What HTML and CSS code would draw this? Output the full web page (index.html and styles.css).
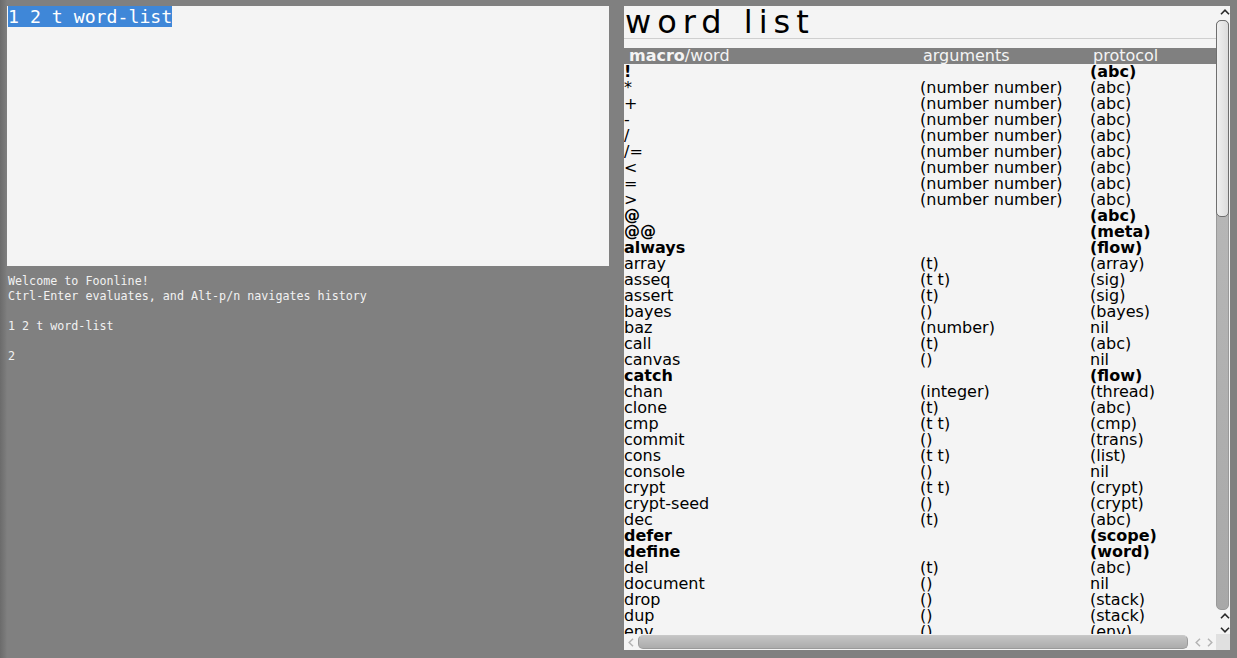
FILE: index.html
```html
<!DOCTYPE html>
<html>
<head>
<meta charset="utf-8">
<title>Foonline</title>
<link rel="stylesheet" href="styles.css">
</head>
<body>
<div class="app">
  <section class="left">
    <div class="editor"><span class="sel">1 2 t word-list</span></div>
    <pre class="output">Welcome to Foonline!
Ctrl-Enter evaluates, and Alt-p/n navigates history

1 2 t word-list

2</pre>
  </section>
  <section class="panel">
    <div class="content">
      <h1 class="title">word list</h1>
      <div class="table">
        <div class="row head"><span class="c1"><b>macro</b>/word</span><span class="c2">arguments</span><span class="c3">protocol</span></div>
        <div class="row b"><span>!</span><span></span><span>(abc)</span></div>
        <div class="row"><span>*</span><span>(number number)</span><span>(abc)</span></div>
        <div class="row"><span>+</span><span>(number number)</span><span>(abc)</span></div>
        <div class="row"><span>-</span><span>(number number)</span><span>(abc)</span></div>
        <div class="row"><span>/</span><span>(number number)</span><span>(abc)</span></div>
        <div class="row"><span>/=</span><span>(number number)</span><span>(abc)</span></div>
        <div class="row"><span>&lt;</span><span>(number number)</span><span>(abc)</span></div>
        <div class="row"><span>=</span><span>(number number)</span><span>(abc)</span></div>
        <div class="row"><span>&gt;</span><span>(number number)</span><span>(abc)</span></div>
        <div class="row b"><span>@</span><span></span><span>(abc)</span></div>
        <div class="row b"><span>@@</span><span></span><span>(meta)</span></div>
        <div class="row b"><span>always</span><span></span><span>(flow)</span></div>
        <div class="row"><span>array</span><span>(t)</span><span>(array)</span></div>
        <div class="row"><span>asseq</span><span>(t t)</span><span>(sig)</span></div>
        <div class="row"><span>assert</span><span>(t)</span><span>(sig)</span></div>
        <div class="row"><span>bayes</span><span>()</span><span>(bayes)</span></div>
        <div class="row"><span>baz</span><span>(number)</span><span>nil</span></div>
        <div class="row"><span>call</span><span>(t)</span><span>(abc)</span></div>
        <div class="row"><span>canvas</span><span>()</span><span>nil</span></div>
        <div class="row b"><span>catch</span><span></span><span>(flow)</span></div>
        <div class="row"><span>chan</span><span>(integer)</span><span>(thread)</span></div>
        <div class="row"><span>clone</span><span>(t)</span><span>(abc)</span></div>
        <div class="row"><span>cmp</span><span>(t t)</span><span>(cmp)</span></div>
        <div class="row"><span>commit</span><span>()</span><span>(trans)</span></div>
        <div class="row"><span>cons</span><span>(t t)</span><span>(list)</span></div>
        <div class="row"><span>console</span><span>()</span><span>nil</span></div>
        <div class="row"><span>crypt</span><span>(t t)</span><span>(crypt)</span></div>
        <div class="row"><span>crypt-seed</span><span>()</span><span>(crypt)</span></div>
        <div class="row"><span>dec</span><span>(t)</span><span>(abc)</span></div>
        <div class="row b"><span>defer</span><span></span><span>(scope)</span></div>
        <div class="row b"><span>define</span><span></span><span>(word)</span></div>
        <div class="row"><span>del</span><span>(t)</span><span>(abc)</span></div>
        <div class="row"><span>document</span><span>()</span><span>nil</span></div>
        <div class="row"><span>drop</span><span>()</span><span>(stack)</span></div>
        <div class="row"><span>dup</span><span>()</span><span>(stack)</span></div>
        <div class="row"><span>env</span><span>()</span><span>(env)</span></div>
        <div class="row"><span>eq</span><span>(t t)</span><span>(abc)</span></div>
      </div>
    </div>
    <div class="vbar">
      <div class="vstep top">
        <svg width="10" height="6" viewBox="0 0 10 6"><polyline points="1,5.2 5,1.2 9,5.2" fill="none" stroke="#2a2a2a" stroke-width="1.6"/></svg>
      </div>
      <div class="vtrack"><div class="vthumb"></div></div>
      <div class="vstep bottom">
        <svg width="10" height="6" viewBox="0 0 10 6"><polyline points="1,5.2 5,1.2 9,5.2" fill="none" stroke="#2a2a2a" stroke-width="1.6"/></svg>
        <svg width="10" height="6" viewBox="0 0 10 6"><polyline points="1,0.8 5,4.8 9,0.8" fill="none" stroke="#2a2a2a" stroke-width="1.6"/></svg>
      </div>
    </div>
    <div class="hbar">
      <div class="hstep left-step">
        <svg width="6" height="9" viewBox="0 0 6 9"><polyline points="5,0.8 1.2,4.5 5,8.2" fill="none" stroke="#b4b4b4" stroke-width="1.5"/></svg>
      </div>
      <div class="htrack"></div>
      <div class="hstep right-step">
        <svg width="6" height="9" viewBox="0 0 6 9"><polyline points="5,0.8 1.2,4.5 5,8.2" fill="none" stroke="#b4b4b4" stroke-width="1.5"/></svg>
        <svg width="6" height="9" viewBox="0 0 6 9"><polyline points="1,0.8 4.8,4.5 1,8.2" fill="none" stroke="#b4b4b4" stroke-width="1.5"/></svg>
      </div>
    </div>
    <div class="corner"></div>
  </section>
</div>
</body>
</html>
```
FILE: styles.css
```css
html, body {
  margin: 0;
  padding: 0;
  height: 100%;
}

body {
  background-color: #808080;
  background-image: linear-gradient(to right, #6b6b6b, #7c7c7c 6px, #808080 7px);
  background-size: 7px 100%;
  background-repeat: no-repeat;
  font-family: "DejaVu Sans", sans-serif;
  overflow: hidden;
}

.app {
  display: flex;
  gap: 15px;
  box-sizing: border-box;
  height: 658px;
  padding: 6px 7px 8px 7px;
}

/* left column */
.left {
  width: 602px;
  display: flex;
  flex-direction: column;
}

.editor {
  height: 260px;
  background: #f4f4f4;
  padding-left: 1px;
  font-family: "DejaVu Sans Mono", monospace;
  font-size: 18.2px;
  line-height: 21px;
  color: #000;
}

.sel {
  background: #3f87d8;
  color: #fff;
}

.output {
  margin: 8px 0 0 1px;
  font-family: "DejaVu Sans Mono", monospace;
  font-size: 11.7px;
  line-height: 15px;
  color: #f2f2f2;
}

/* right panel */
.panel {
  width: 606px;
  height: 644px;
  background: #f4f4f4;
  display: grid;
  grid-template-columns: 592px 14px;
  grid-template-rows: 628px 16px;
}

.content {
  overflow: hidden;
}

.title {
  margin: 0 0 9px 0;
  height: 33px;
  box-sizing: border-box;
  padding-left: 1px;
  font-family: "DejaVu Sans", sans-serif;
  font-weight: normal;
  font-size: 32px;
  line-height: 33px;
  letter-spacing: 6px;
  color: #000;
  border-bottom: 1px solid #cfcfcf;
  white-space: nowrap;
}

.table {
  font-size: 16px;
  line-height: 16px;
  color: #000;
}

.row {
  display: grid;
  grid-template-columns: 296px 170px 1fr;
  height: 16px;
  white-space: nowrap;
}

.row.b {
  font-weight: bold;
}

.row.head {
  background: #808080;
  color: #f4f4f4;
}

.row.head .c1 { padding-left: 5px; }
.row.head .c2 { padding-left: 3px; }
.row.head .c3 { padding-left: 3px; }

/* vertical scrollbar */
.vbar {
  display: flex;
  flex-direction: column;
}

.vstep {
  display: flex;
  flex-direction: column;
  align-items: center;
}

.vstep.top {
  height: 14px;
  padding-top: 3px;
  box-sizing: border-box;
  padding-left: 3px;
}

.vstep.bottom {
  height: 24px;
  padding-top: 3px;
  padding-left: 3px;
  box-sizing: border-box;
  gap: 8px;
}

.vtrack {
  flex: 1;
  width: 13px;
  background: linear-gradient(to bottom, #bdbdbd, #a8a8a8);
  border-radius: 5px;
  box-sizing: border-box;
  border: 1px solid #999;
}

.vthumb {
  height: 197px;
  margin: -1px;
  box-sizing: border-box;
  border: 1px solid #6f6f6f;
  border-radius: 5px;
  background: linear-gradient(to right, #f0f0f0, #dcdcdc);
}

/* horizontal scrollbar */
.hbar {
  display: flex;
  align-items: center;
}

.hstep {
  display: flex;
  align-items: center;
  height: 16px;
}

.left-step {
  width: 14px;
  padding-left: 4px;
  box-sizing: border-box;
}

.right-step {
  width: 28px;
  padding-left: 7px;
  gap: 6px;
  box-sizing: border-box;
}

.htrack {
  flex: 1;
  height: 14px;
  box-sizing: border-box;
  border: 1px solid #9a9a9a;
  border-top-color: #c8c8c8;
  border-radius: 5px;
  background: linear-gradient(to bottom, #c4c4c4, #acacac);
}

.corner {
  background: #e0e0e0;
}
```
